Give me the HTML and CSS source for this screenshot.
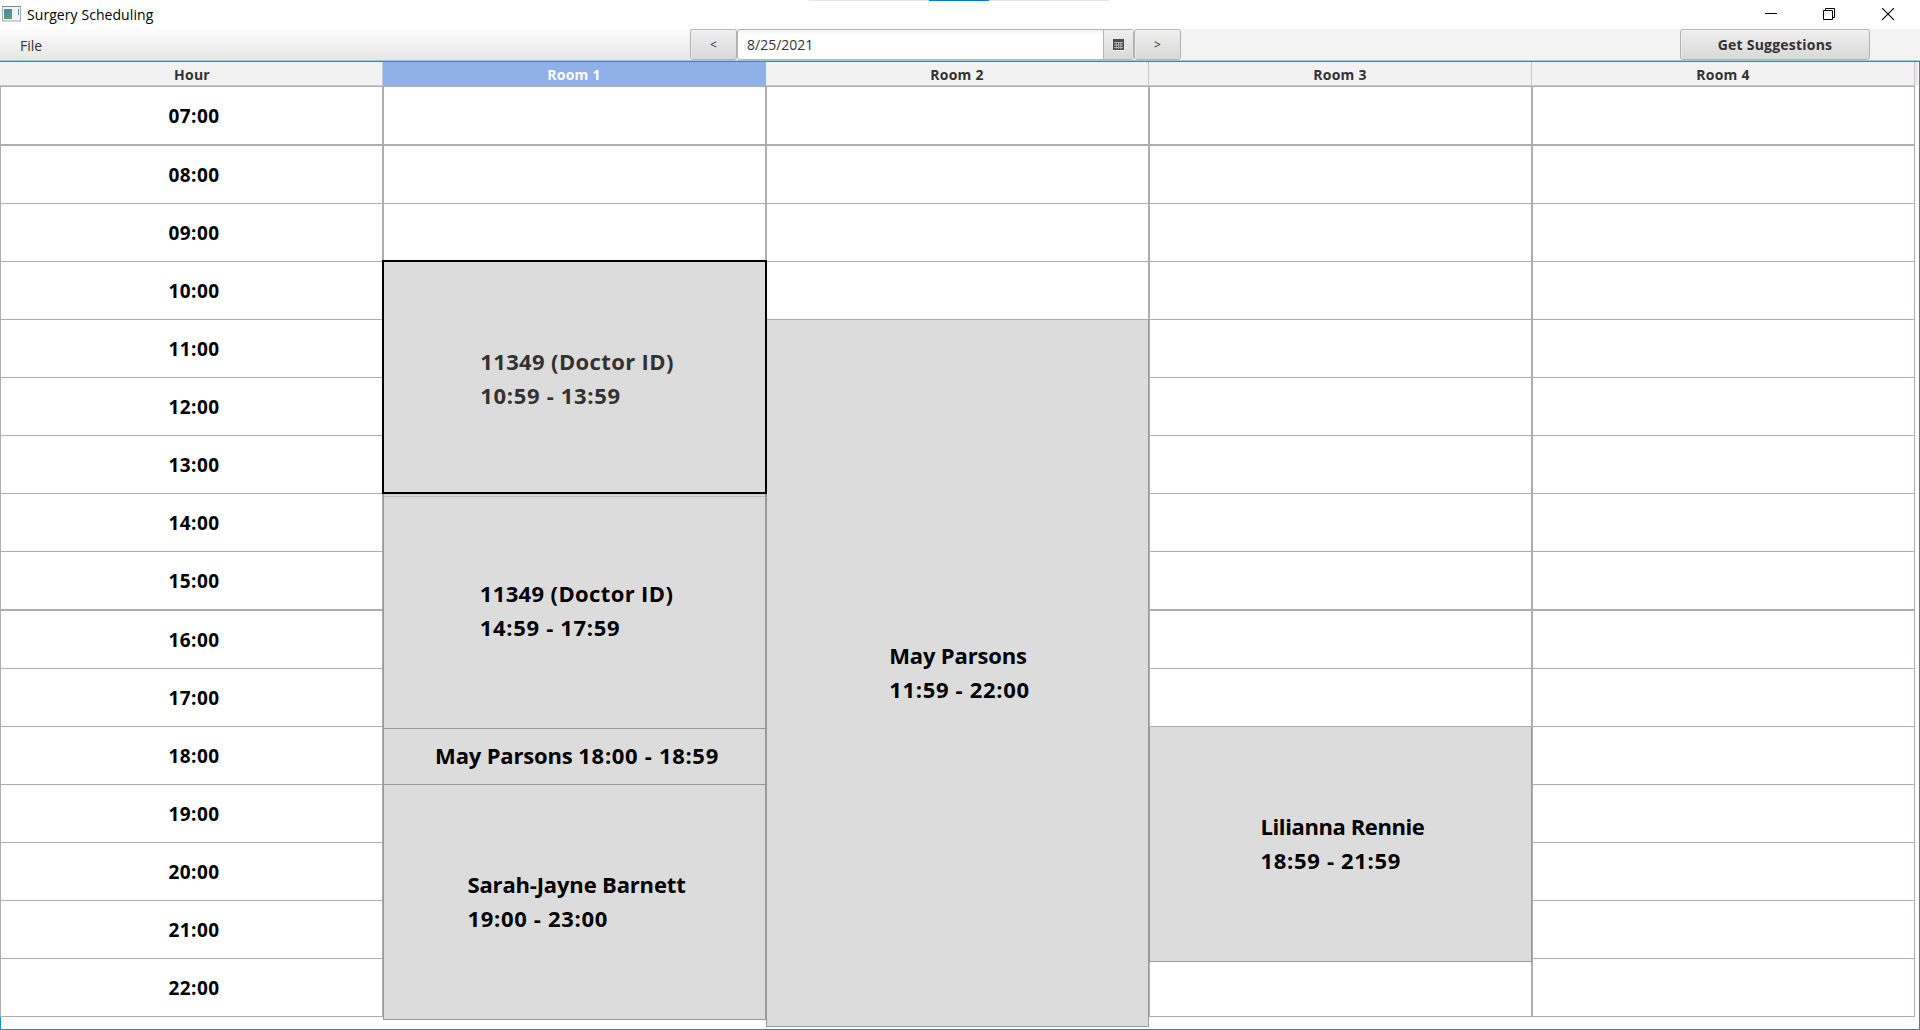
FILE: index.html
```html
<!DOCTYPE html>
<html lang="en">
<head>
<meta charset="utf-8">
<title>Surgery Scheduling</title>
<link rel="stylesheet" href="styles.css">
</head>
<body>
<div class="window">
  <header class="titlebar">
    <svg class="app-icon" width="19" height="16" viewBox="0 0 19 16"><rect x=".5" y=".5" width="18" height="14.500" fill="#f2f4f5" stroke="#a3a9ae"/><path d="M0 .5h19" stroke="#7e8890"/><defs><linearGradient id="g" x1="0" y1="0" x2=".6" y2="1"><stop offset="0" stop-color="#4f7fa6"/><stop offset="1" stop-color="#55a278"/></linearGradient></defs><rect x="2" y="3" width="8" height="10" fill="url(#g)"/><rect x="16" y="3" width="1" height="6" fill="#4c93a0"/></svg>
    <span class="title">Surgery Scheduling</span>
    <div class="handle"><i></i></div>
    <div class="controls">
      <svg class="minimize" width="12" height="12"><path d="M0 5.500h12" stroke="#000"/></svg>
      <svg width="12" height="12" fill="none" stroke="#000"><path d="M.5 2.500h9v9h-9zM2.500 2.500v-2h9v9h-2"/></svg>
      <svg width="12" height="12"><path d="M0 0l12 12M12 0L0 12" stroke="#000" stroke-width="1.100"/></svg>
    </div>
  </header>
  <div class="toolbar">
    <nav class="menubar"><span class="menu">File</span></nav>
    <div class="datebar">
      <button class="btn step">&lt;</button>
      <div class="picker">
        <span class="date">8/25/2021</span>
        <span class="pick"><svg width="11" height="12"><path d="M0 11.500h11" stroke="#fff"/><path d="M0 0h11v11H0z" fill="#4d4d4d"/><path d="M1 3.500h9M1 6h9M1 8.500h9M3.300 3v7M5.500 3v7M7.800 3v7" stroke="#c4c4c4" stroke-width=".8"/></svg></span>
      </div>
      <button class="btn step">&gt;</button>
    </div>
    <button class="btn suggest">Get Suggestions</button>
  </div>
  <main class="schedule">
    <div class="heads">
      <div class="head hour-head">Hour</div><div class="head selected">Room 1</div><div class="head">Room 2</div><div class="head">Room 3</div><div class="head">Room 4</div><div class="corner"></div>
    </div>
    <div class="columns">
      <div class="column hours">
        <div class="cell first">07:00</div><div class="cell first">08:00</div><div class="cell">09:00</div><div class="cell">10:00</div><div class="cell">11:00</div><div class="cell">12:00</div><div class="cell">13:00</div><div class="cell">14:00</div><div class="cell">15:00</div><div class="cell first">16:00</div><div class="cell">17:00</div><div class="cell">18:00</div><div class="cell">19:00</div><div class="cell">20:00</div><div class="cell">21:00</div><div class="cell">22:00</div>
      </div>
      <div class="column">
        <div class="cell first"></div><div class="cell first"></div><div class="cell"></div>
        <div class="event chosen"><p><span class="wide">11349 (Doctor ID)</span><br><span class="time">10:59 - 13:59</span></p></div>
        <div class="event second"><p><span class="wide">11349 (Doctor ID)</span><br><span class="time">14:59 - 17:59</span></p></div>
        <div class="event short"><p><span class="name">May Parsons</span> <span class="time">18:00 - 18:59</span></p></div>
        <div class="event evening"><p><span class="name">Sarah-Jayne Barnett</span><br><span class="time">19:00 - 23:00</span></p></div>
      </div>
      <div class="column">
        <div class="cell first"></div><div class="cell first"></div><div class="cell"></div><div class="cell"></div>
        <div class="event long"><p><span class="name">May Parsons</span><br><span class="time">11:59 - 22:00</span></p></div>
      </div>
      <div class="column">
        <div class="cell first"></div><div class="cell first"></div><div class="cell"></div><div class="cell"></div><div class="cell"></div><div class="cell"></div><div class="cell"></div><div class="cell"></div><div class="cell"></div><div class="cell first"></div><div class="cell"></div>
        <div class="event evening"><p><span class="narrow">Lilianna Rennie</span><br><span class="time">18:59 - 21:59</span></p></div>
        <div class="cell rest"></div>
      </div>
      <div class="column">
        <div class="cell first"></div><div class="cell first"></div><div class="cell"></div><div class="cell"></div><div class="cell"></div><div class="cell"></div><div class="cell"></div><div class="cell"></div><div class="cell"></div><div class="cell first"></div><div class="cell"></div><div class="cell"></div><div class="cell"></div><div class="cell"></div><div class="cell"></div><div class="cell"></div>
      </div>
    </div>
  </main>
</div>
</body>
</html>
```
FILE: styles.css
```css
* { box-sizing: border-box; }
body { margin: 0; background: #fff; font-family: "Open Sans", "Noto Sans", sans-serif; color: #323232; }
.window { width: 1920px; height: 1030px; display: flex; flex-direction: column; overflow: hidden; }
.titlebar { height: 29px; display: grid; grid-template-columns: 19px 788px 301px 1fr; padding-left: 1px; color: #000; }
.app-icon { margin: 6px 0 0 1px; }
.title { font-size: 14px; line-height: 29px; padding-left: 7px; letter-spacing: .07px; }
.handle { height: 1px; background: #e5e5e5; margin-left: 1px; display: flex; }
.handle i { width: 60px; margin-left: 120px; background: #0078d7; }
.controls { display: flex; justify-content: flex-end; gap: 47px; padding: 8px 26px 0 0; }
.minimize { margin-right: -1px; }
.toolbar { height: 32px; display: flex; background: #f3f3f3; border-bottom: 1px solid #a4cbdc; flex: none; }
.menubar { width: 690px; background: linear-gradient(#fcfcfc, #e6e6e6); padding-left: 20px; }
.menu { font-size: 14px; line-height: 33px; }
.datebar { display: flex; width: 491px; }
.btn { height: 31px; border: 1px solid #b3b3b3; border-radius: 3px; background: linear-gradient(#efefef, #d9d9d9); box-shadow: inset 0 1px #fafafa, inset 1px 0 #ececec; font: 14px "Open Sans", sans-serif; color: #323232; padding: 0; }
.step { width: 47px; font-size: 12px; }
.picker { width: 397px; display: flex; border: 1px solid #b3b3b3; border-radius: 3px; background: linear-gradient(#f3f3f3, #fff 5px); font-size: 14px; }
.date { flex: 1; padding-left: 9px; line-height: 29px; }
.pick { width: 30px; border-left: 1px solid #b3b3b3; background: linear-gradient(#efefef, #d9d9d9); display: grid; place-items: center; }
.suggest { width: 190px; margin-left: 499px; font-weight: 700; letter-spacing: .22px; }
.schedule { flex: 1; border: 1px solid #0a96c8; position: relative; }
.heads { display: flex; height: 24px; margin-left: -1px; }
.head { width: 383px; border-right: 1px solid #c8c8c8; border-bottom: 1px solid #c8c8c8; background: #f2f2f2; font-size: 14px; font-weight: 700; line-height: 25px; text-align: center; letter-spacing: .25px; }
.hour-head { padding-left: 2px; }
.head.selected { background: #90b0e8; border-color: #90b0e8; color: #fff; }
.corner { width: 3px; background: #e6e6e6; border-radius: 0 3px 3px 0; }
.columns { display: flex; margin-left: -1px; height: 940px; }
.column { width: 383px; display: flex; flex-direction: column; }
.cell { height: 58px; flex: none; border: 1px solid rgba(0,0,0,.32); border-top: 0; background: #fff; color: #000; font-size: 19px; font-weight: 700; line-height: 58px; letter-spacing: .4px; text-align: center; }
.cell.first { height: 59px; border-top: 1px solid rgba(0,0,0,.32); }
.hours .cell { padding-left: 5px; }
.cell.rest { height: 55px; }
.event { flex: none; display: flex; align-items: center; justify-content: center; background: #dcdcdc; border: 1px solid rgba(0,0,0,.3); border-top: 0; color: #000; font-size: 22px; font-weight: 700; line-height: 34px; }
.event p { margin: 0; padding: 0 0 2px 4px; }
.time { letter-spacing: .68px; }
.wide { letter-spacing: .37px; }
.name { letter-spacing: -.16px; }
.narrow { letter-spacing: -.4px; }
.event.chosen { height: 234px; margin: -2px -1px 0; border: 2px solid #000; color: #323232; z-index: 1; }
.chosen p { padding: 2px 0 0 5px; }
.second { height: 235px; box-shadow: inset 0 1px #cfcfcf, inset 0 2px #dcdcdc, inset 0 3px #bdbdbd; }
.short { height: 56px; }
.short p { padding: 0 0 3px 5px; }
.evening { height: 235px; }
.long { height: 707px; }
```
